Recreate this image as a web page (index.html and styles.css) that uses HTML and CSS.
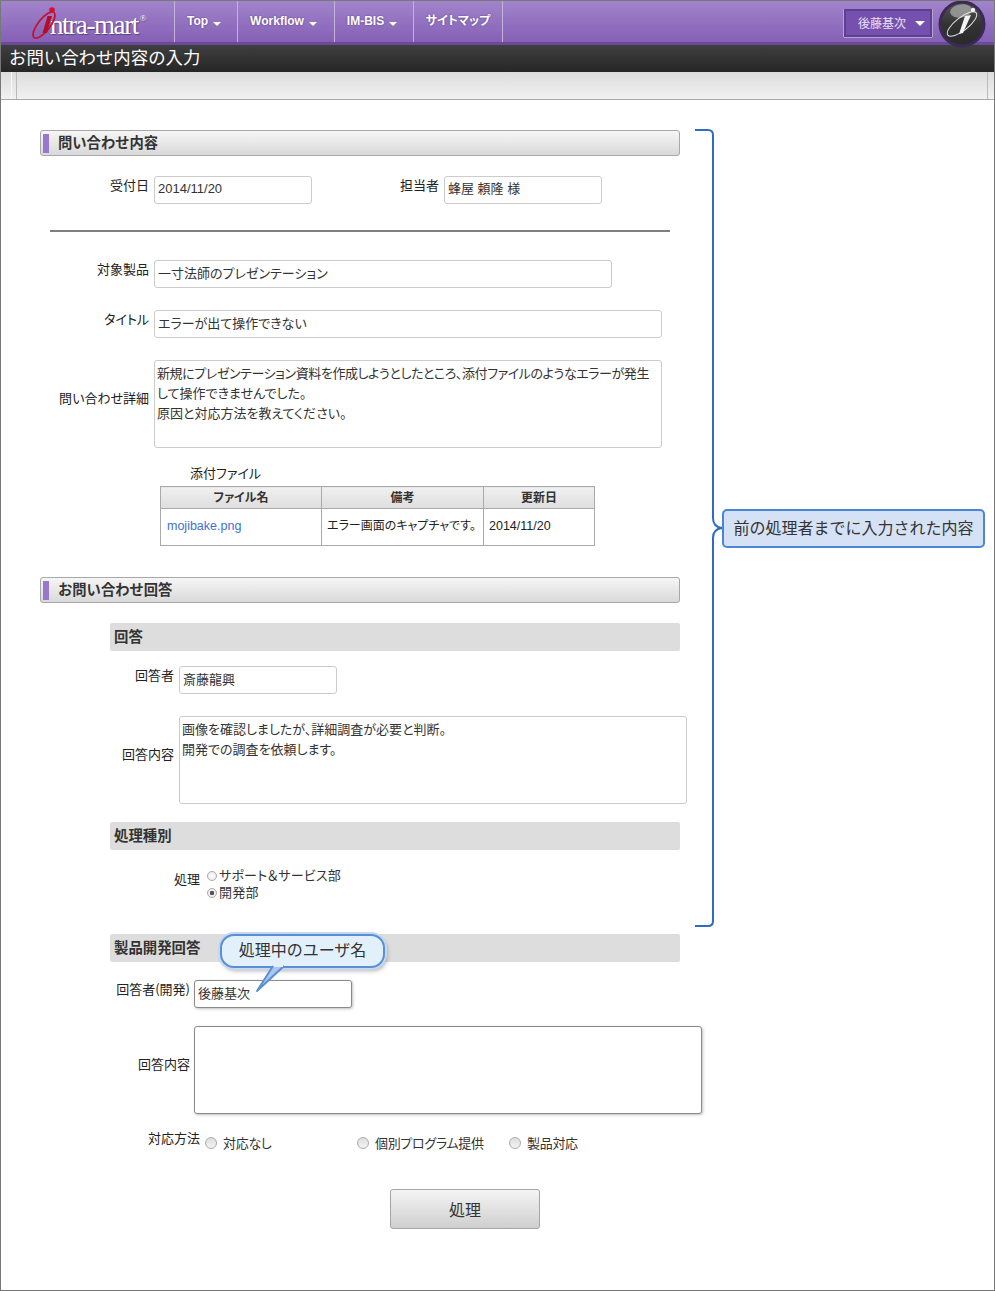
FILE: index.html
```html
<!DOCTYPE html>
<html lang="ja">
<head>
<meta charset="utf-8">
<title>お問い合わせ内容の入力</title>
<link rel="stylesheet" href="styles.css">
</head>
<body>
<div class="frame">
  <header class="nav">
    <div class="logo">
      <svg class="logo-mark" width="40" height="36" viewBox="0 0 40 36">
        <ellipse cx="12" cy="19" rx="6" ry="16" transform="rotate(38 12 19)" fill="none" stroke="#c8102e" stroke-width="1.8"/>
        <circle cx="20" cy="4" r="2.8" fill="#d0122f"/>
        <path d="M15.5 10 L10.5 27 L15 27 L20 10 Z" fill="#b50d28"/>
      </svg>
      <span class="logo-text">ntra-mart</span><span class="logo-reg">®</span>
    </div>
    <ul class="menu">
      <li class="menu-item w-top">Top<i class="caret"></i></li>
      <li class="menu-item w-wf">Workflow<i class="caret"></i></li>
      <li class="menu-item w-bis">IM-BIS<i class="caret"></i></li>
      <li class="menu-item w-map">サイトマップ</li>
    </ul>
    <div class="nav-right">
      <div class="user">後藤基次<i class="user-caret"></i></div>
      <svg class="badge" width="48" height="48" viewBox="0 0 48 48">
        <defs>
          <linearGradient id="ball" x1="0" y1="0" x2="0" y2="1"><stop offset="0" stop-color="#555"/><stop offset=".5" stop-color="#333"/><stop offset="1" stop-color="#2a2a2a"/></linearGradient>
        </defs>
        <circle cx="24" cy="24" r="23.5" fill="#3a2a55"/>
        <circle cx="24" cy="24" r="20.5" fill="url(#ball)"/>
        <ellipse cx="23" cy="11" rx="11" ry="6.5" transform="rotate(-8 23 11)" fill="#aaa" opacity=".75"/>
        <ellipse cx="24" cy="24" rx="6.5" ry="18" transform="rotate(52 24 24)" fill="none" stroke="#e4e4e4" stroke-width="1"/>
        <circle cx="35" cy="10" r="2.2" fill="#f2f2f2"/>
        <path d="M27 16 L33 15 L25 33 L21 34 Z" fill="#f4f4f4"/>
      </svg>
    </div>
  </header>
  <div class="titlebar">お問い合わせ内容の入力</div>
  <div class="toolbar"><span class="toolbar-grip"></span><span class="toolbar-end"></span></div>

  <main class="content">
    <h2 class="section"><i class="section-mark"></i>問い合わせ内容</h2>

    <div class="row row-a">
      <label class="lbl l-109">受付日</label><div class="val w158">2014/11/20</div>
      <label class="lbl l-127">担当者</label><div class="val w158">蜂屋 頼隆 様</div>
    </div>
    <hr class="rule">
    <div class="row row-b">
      <label class="lbl l-109">対象製品</label><div class="val w458">一寸法師のプレゼンテーション</div>
    </div>
    <div class="row row-c">
      <label class="lbl l-109">タイトル</label><div class="val w508">エラーが出て操作できない</div>
    </div>
    <div class="row row-d mid">
      <label class="lbl l-109">問い合わせ詳細</label>
      <div class="val area area-fit w508">新規にプレゼンテーション資料を作成しようとしたところ、添付ファイルのようなエラーが発生<br>して操作できませんでした。<br>原因と対応方法を教えてください。</div>
    </div>

    <div class="attach-title">添付ファイル</div>
    <table class="files">
      <thead><tr><th class="c1">ファイル名</th><th class="c2">備考</th><th class="c3">更新日</th></tr></thead>
      <tbody><tr><td><a class="file-link" href="#">mojibake.png</a></td><td class="tight">エラー画面のキャプチャです。</td><td class="tight">2014/11/20</td></tr></tbody>
    </table>

    <h2 class="section sec2"><i class="section-mark"></i>お問い合わせ回答</h2>

    <h3 class="sub s-a">回答</h3>
    <div class="row row-e">
      <label class="lbl l-134">回答者</label><div class="val w158">斎藤龍興</div>
    </div>
    <div class="row row-f mid">
      <label class="lbl l-134">回答内容</label>
      <div class="val area w508">画像を確認しましたが、詳細調査が必要と判断。<br>開発での調査を依頼します。</div>
    </div>

    <h3 class="sub s-b">処理種別</h3>
    <div class="row row-g">
      <label class="lbl l-160 proc">処理</label>
      <div class="radios-v">
        <div class="rv"><i class="radio-s"></i>サポート＆サービス部</div>
        <div class="rv"><i class="radio-s on"></i>開発部</div>
      </div>
    </div>

    <h3 class="sub s-c">製品開発回答</h3>
    <div class="row row-h">
      <label class="lbl l-150">回答者(開発)</label><div class="val w158 active">後藤基次</div>
    </div>
    <div class="row row-i mid">
      <label class="lbl l-150">回答内容</label><div class="val area w508 active"></div>
    </div>
    <div class="row row-j">
      <label class="lbl l-160 method">対応方法</label>
      <div class="opts">
        <span class="opt"><i class="radio-b"></i>対応なし</span>
        <span class="opt"><i class="radio-b"></i>個別プログラム提供</span>
        <span class="opt"><i class="radio-b"></i>製品対応</span>
      </div>
    </div>
    <div class="actions"><button class="btn" type="button">処理</button></div>
  </main>

  <svg class="bracket" width="30" height="800" viewBox="0 0 30 800">
    <path d="M0 1 H13 Q18 1 18 6 V389 Q18 398 27 399 Q18 400 18 409 V792 Q18 797 13 797 H0" fill="none" stroke="#2e6cc8" stroke-width="2"/>
  </svg>
  <div class="note">前の処理者までに入力された内容</div>

  <div class="bubble">処理中のユーザ名</div>
  <svg class="bubble-tail" width="40" height="30" viewBox="0 0 40 30">
    <path d="M18 1 L2 26 L29 1" fill="#a9c6ec" stroke="#5a8fd6" stroke-width="2" stroke-linejoin="round"/>
    <path d="M19 0 H28 V2 H19 Z" fill="#e1f0fa"/>
  </svg>
</div>
</body>
</html>
```
FILE: styles.css
```css
* { box-sizing: border-box; }
html, body { margin: 0; padding: 0; background: #fff; }
body { font-family: "Noto Sans CJK JP", "Liberation Sans", sans-serif; font-size: 13px; color: #222; font-feature-settings: "palt"; }
.frame { position: relative; width: 995px; height: 1291px; border: 1px solid #777; overflow: hidden; }

.nav { display: flex; height: 44px; background: linear-gradient(#a184cb, #8560b5); border-bottom: 3px solid #6c4a9a; }
.logo { position: relative; width: 173px; flex: none; color: #fff; font-family: "Liberation Serif", serif; padding: 9px 0 0 49px; text-shadow: 1px 1px 1px #5a3d85; white-space: nowrap; }
.logo-mark { position: absolute; left: 31px; top: 5px; }
.logo-text { font-size: 27px; line-height: 30px; letter-spacing: -1.4px; }
.logo-reg { margin-left: 2px; font-size: 9px; line-height: 0; vertical-align: 13px; }
.menu { display: flex; list-style: none; margin: 0; padding: 0; border-left: 1px solid #c4b2dd; height: 41px; }
.menu-item { display: flex; align-items: flex-start; padding-top: 11px; justify-content: center; border-right: 1px solid #c4b2dd; color: #fff; font-family: "Liberation Sans", "Noto Sans CJK JP", sans-serif; font-size: 12px; font-weight: 700; line-height: 18px; text-shadow: 0 0 2px #5a3d85; }
.w-top { width: 63px; padding-right: 4px; }
.w-wf { width: 97px; padding-right: 5px; }
.w-bis { width: 79px; padding-right: 4px; }
.w-map { width: 89px; }
.caret { width: 0; height: 0; margin: 10px 0 0 5px; border: 4px solid transparent; border-top-color: #fff; border-bottom: 0; }
.nav-right { position: relative; margin-left: auto; display: flex; }
.user { display: flex; align-items: center; width: 88px; height: 28px; margin: 8px 62px 0 0; padding: 0 0 2px 12px; background: #7650ae; border: 2px solid #5d3f92; box-shadow: 0 1px 0 #b7a3d6, -1px 0 0 #b7a3d6, 1px 0 0 #b7a3d6; color: #e8e0f4; font-size: 12px; }
.user-caret { width: 0; height: 0; margin: 2px 0 0 9px; border: 5px solid transparent; border-top-color: #fff; border-bottom: 0; }
.badge { position: absolute; right: 8px; top: -1px; }

.titlebar { height: 27px; padding-left: 8px; background: linear-gradient(#3f3f3f, #262626); color: #fff; font-size: 17.4px; line-height: 24px; font-feature-settings: normal; white-space: nowrap; }
.toolbar { display: flex; height: 28px; background: linear-gradient(#dcdcdc, #f1f1f1); border-bottom: 1px solid #aaa; padding-left: 10px; padding-right: 6px; justify-content: space-between; }
.toolbar-grip { width: 6px; border-left: 1px solid #f8f8f8; border-right: 1px solid #bbb; }
.toolbar-end { width: 1px; background: #bbb; }

.content { padding: 30px 0 0 39px; }
.section { display: flex; align-items: center; width: 640px; height: 26px; margin: 0; padding: 0 0 3px 2px; background: linear-gradient(#f6f6f6, #d9d9d9); border: 1px solid #a8a8a8; border-radius: 3px; font-size: 14.3px; font-weight: 700; color: #333; font-feature-settings: normal; }
.section-mark { width: 6px; height: 19px; margin: 3px 9px 0 0; background: #9a77cf; }
.sec2 { margin-top: 31px; }

.row { display: flex; align-items: flex-start; }
.mid { align-items: center; }
.mid .lbl { margin-bottom: 13px; }
.lbl { flex: none; text-align: right; line-height: 18px; margin-right: 5px; color: #222; white-space: nowrap; }
.l-109 { width: 109px; }
.l-127 { width: 127px; }
.l-134 { width: 134px; }
.l-160 { width: 160px; }
.l-150 { width: 150px; margin-right: 4px; }
.val { flex: none; height: 28px; padding: 0 3px; line-height: 23px; background: #fff; border: 1px solid #ccc; border-radius: 3px; color: #333; white-space: nowrap; }
.w158 { width: 158px; }
.w458 { width: 458px; }
.w508 { width: 508px; }
.area { height: 88px; padding: 2px; line-height: 20px; white-space: nowrap; }
.area-fit::first-line { letter-spacing: -0.42px; }
.active { border-color: #8a8a8a; box-shadow: 1px 1px 3px rgba(0,0,0,.25); }

.row-a { margin-top: 20px; }
.row-a .val { font-family: "Liberation Sans", "Noto Sans CJK JP", sans-serif; }
.rule { width: 620px; height: 2px; margin: 26px 0 0 10px; background: #808080; border: 0; }
.row-b { margin-top: 28px; }
.row-c { margin-top: 22px; }
.row-d { margin-top: 22px; }

.attach-title { margin: 16px 0 0 150px; line-height: 18px; color: #222; }
.files { width: 435px; margin: 4px 0 0 120px; border-collapse: collapse; table-layout: fixed; font-size: 12px; }
.files th, .files td { border: 1px solid #aaa; }
.files th { height: 22px; padding: 0 0 2px; background: linear-gradient(#f0f0f0, #dedede); font-weight: 700; color: #333; line-height: 18px; }
.files td { height: 37px; padding: 0 0 6px 6px; color: #222; white-space: nowrap; }
.files td.tight { padding-left: 5px; }
.files td:last-child { padding-bottom: 2px; font-family: "Liberation Sans", "Noto Sans CJK JP", sans-serif; font-size: 12.5px; }
.c1 { width: 161px; }
.c2 { width: 162px; }
.file-link { color: #3f6fcf; text-decoration: none; font-family: "Liberation Sans", sans-serif; font-size: 12.5px; }

.sub { width: 570px; height: 28px; margin: 0 0 0 70px; padding-left: 4px; background: #ddd; border-radius: 2px; font-size: 14.4px; font-weight: 700; line-height: 25px; color: #333; font-feature-settings: normal; }
.s-a { margin-top: 20px; }
.s-b { margin-top: 18px; }
.s-c { margin-top: 34px; }
.row-e { margin-top: 15px; }
.row-f { margin-top: 22px; }
.row-g { margin-top: 16px; }
.proc { margin-top: 4px; }
.radios-v { line-height: 17px; color: #333; letter-spacing: .2px; }
.rv { display: flex; align-items: center; height: 17px; }
.radio-s { width: 10px; height: 10px; margin: 2px 2px 0 2px; border: 1px solid #aaa; border-radius: 50%; background: radial-gradient(#fff, #e6e6e6); }
.radio-s.on { background: radial-gradient(#555 0 2px, #eee 2.5px); }

.row-h { margin-top: 18px; }
.row-i { margin-top: 18px; }
.row-j { margin-top: 17px; }
.method { margin-top: -2px; }
.opts { display: flex; padding-top: 3px; color: #333; line-height: 18px; letter-spacing: -0.3px; }
.opt { display: flex; align-items: center; width: 152px; white-space: nowrap; }
.radio-b { width: 12px; height: 12px; margin-right: 6px; border: 1px solid #aaa; border-radius: 50%; background: linear-gradient(#ddd, #f4f4f4); }
.actions { margin: 37px 0 0 350px; }
.btn { width: 150px; height: 40px; padding: 0; background: linear-gradient(#f4f4f4, #cfcfcf); border: 1px solid #a5a5a5; border-radius: 3px; font: 16px "Noto Sans CJK JP", sans-serif; color: #333; }

.bracket { position: absolute; left: 694px; top: 128px; }
.note { position: absolute; left: 721px; top: 508px; width: 263px; height: 39px; background: #d5e1f5; border: 2px solid #4a86d8; border-radius: 5px; color: #333; font-size: 16px; line-height: 33px; text-align: center; white-space: nowrap; font-feature-settings: normal; }
.bubble { position: absolute; left: 219px; top: 933px; width: 165px; height: 34px; background: #e1f0fa; border: 2px solid #5a8fd6; border-radius: 14px; box-shadow: 0 0 0 2px #c5d8f0, 2px 3px 4px rgba(0,0,0,.3); color: #333; font-size: 16px; line-height: 26px; text-align: center; font-feature-settings: normal; }
.bubble-tail { position: absolute; left: 254px; top: 964px; }
```
